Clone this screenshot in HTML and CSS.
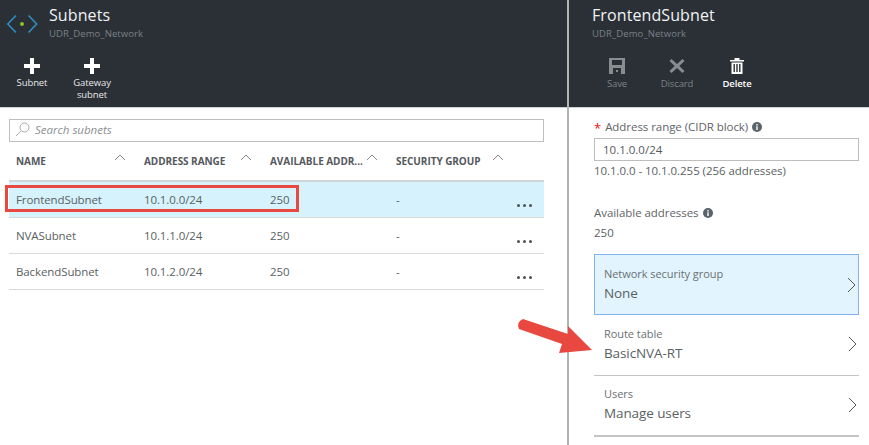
FILE: index.html
```html
<!DOCTYPE html>
<html lang="en">
<head>
<meta charset="utf-8">
<title>Subnets</title>
<link rel="stylesheet" href="styles.css">
</head>
<body>
<div class="page">
  <section class="blade blade-left">
    <header class="head">
      <div class="title-row">
        <svg class="logo" width="32" height="20" viewBox="0 0 32 20"><path d="M10 1.5 L1.8 10 L10 18.5" fill="none" stroke="#2f8fc4" stroke-width="1.6"/><path d="M22.5 1.5 L30.7 10 L22.5 18.5" fill="none" stroke="#2f8fc4" stroke-width="1.6"/><circle cx="16" cy="10" r="2" fill="#8cc31f"/></svg>
        <div class="titles">
          <h1 class="title">Subnets</h1>
          <div class="sub">UDR_Demo_Network</div>
        </div>
      </div>
      <div class="tools tools-left">
        <div class="tool tool-subnet">
          <svg class="ico" width="16" height="16" viewBox="0 0 16 16"><path d="M6 0h4v6h6v4h-6v6H6v-6H0V6h6z" fill="#fff"/></svg>
          <span>Subnet</span>
        </div>
        <div class="tool tool-gw">
          <svg class="ico" width="16" height="16" viewBox="0 0 16 16"><path d="M6 0h4v6h6v4h-6v6H6v-6H0V6h6z" fill="#fff"/></svg>
          <span>Gateway<br>subnet</span>
        </div>
      </div>
    </header>
    <div class="body-left">
      <div class="search">
        <svg width="15" height="15" viewBox="0 0 15 15"><circle cx="9.5" cy="5.5" r="4.5" fill="none" stroke="#a9a9a9"/><path d="M6 9 L1 14" stroke="#a9a9a9"/></svg>
        <span>Search subnets</span>
      </div>
      <div class="grid">
        <div class="row row-head">
          <div class="cell c1">NAME<svg class="caret" width="12" height="7" viewBox="0 0 12 7"><path d="M1 6 L6 1 L11 6" fill="none" stroke="#8a8a8a"/></svg></div>
          <div class="cell c2">ADDRESS RANGE<svg class="caret" width="12" height="7" viewBox="0 0 12 7"><path d="M1 6 L6 1 L11 6" fill="none" stroke="#8a8a8a"/></svg></div>
          <div class="cell c3">AVAILABLE ADDR...<svg class="caret" width="12" height="7" viewBox="0 0 12 7"><path d="M1 6 L6 1 L11 6" fill="none" stroke="#8a8a8a"/></svg></div>
          <div class="cell c4">SECURITY GROUP<svg class="caret" width="12" height="7" viewBox="0 0 12 7"><path d="M1 6 L6 1 L11 6" fill="none" stroke="#8a8a8a"/></svg></div>
        </div>
        <div class="row row-sel">
          <div class="cell c1">FrontendSubnet</div><div class="cell c2">10.1.0.0/24</div><div class="cell c3">250</div><div class="cell c4">-</div><div class="more"><i></i><i></i><i></i></div>
        </div>
        <div class="row">
          <div class="cell c1">NVASubnet</div><div class="cell c2">10.1.1.0/24</div><div class="cell c3">250</div><div class="cell c4">-</div><div class="more"><i></i><i></i><i></i></div>
        </div>
        <div class="row">
          <div class="cell c1">BackendSubnet</div><div class="cell c2">10.1.2.0/24</div><div class="cell c3">250</div><div class="cell c4">-</div><div class="more"><i></i><i></i><i></i></div>
        </div>
      </div>
    </div>
  </section>
  <div class="divider"></div>
  <section class="blade blade-right">
    <header class="head">
      <div class="titles titles-right">
        <h1 class="title">FrontendSubnet</h1>
        <div class="sub">UDR_Demo_Network</div>
      </div>
      <div class="tools tools-right">
        <div class="tool tool-action disabled">
          <svg class="ico" width="16" height="16" viewBox="0 0 16 16"><path fill-rule="evenodd" d="M0 0h16v16H0zM3 2v5h10V2zM4 10v6h8v-6zM7 12h2v2H7z" fill="#8a8d90"/></svg>
          <span>Save</span>
        </div>
        <div class="tool tool-action disabled">
          <svg class="ico" width="16" height="16" viewBox="0 0 16 16"><path d="M2.5 1 L8 6 L13.5 1 L15.5 3 L10.3 8 L15.5 13 L13.5 15 L8 10 L2.5 15 L.5 13 L5.7 8 L.5 3 Z" fill="#8a8d90"/></svg>
          <span>Discard</span>
        </div>
        <div class="tool tool-action strong">
          <svg class="ico" width="16" height="16" viewBox="0 0 16 16"><path fill-rule="evenodd" d="M5.5 0h5v2H15v1.4H1V2h4.5zM2.5 4.5h11V16h-11zM4.5 6v8h1.4V6zM7.3 6v8h1.4V6zM10.1 6v8h1.4V6z" fill="#fff"/></svg>
          <span>Delete</span>
        </div>
      </div>
    </header>
    <div class="body-right">
      <div class="label"><b class="req">*</b> Address range (CIDR block)<svg class="info" width="10" height="10" viewBox="0 0 10 10"><circle cx="5" cy="5" r="5" fill="#59636b"/><path d="M4.3 4.3h1.4v3.7H4.3zM4.3 2h1.4v1.4H4.3z" fill="#fff"/></svg></div>
      <div class="input">10.1.0.0/24</div>
      <div class="hint">10.1.0.0 - 10.1.0.255 (256 addresses)</div>
      <div class="label label-avail">Available addresses<svg class="info" width="10" height="10" viewBox="0 0 10 10"><circle cx="5" cy="5" r="5" fill="#59636b"/><path d="M4.3 4.3h1.4v3.7H4.3zM4.3 2h1.4v1.4H4.3z" fill="#fff"/></svg></div>
      <div class="value">250</div>
      <div class="pick pick-active">
        <div><div class="pick-label">Network security group</div><div class="pick-value">None</div></div>
        <svg width="9" height="16" viewBox="0 0 9 16"><path d="M1 1 L8 8 L1 15" fill="none" stroke="#555"/></svg>
      </div>
      <div class="pick">
        <div><div class="pick-label">Route table</div><div class="pick-value">BasicNVA-RT</div></div>
        <svg width="9" height="16" viewBox="0 0 9 16"><path d="M1 1 L8 8 L1 15" fill="none" stroke="#555"/></svg>
      </div>
      <div class="pick pick-last">
        <div><div class="pick-label">Users</div><div class="pick-value">Manage users</div></div>
        <svg width="9" height="16" viewBox="0 0 9 16"><path d="M1 1 L8 8 L1 15" fill="none" stroke="#555"/></svg>
      </div>
    </div>
  </section>
  <div class="highlight"></div>
  <svg class="arrow" width="80" height="44" viewBox="0 0 80 44"><path d="M8 3 L53 18 L53 10 L77 34 L44 37 L47 28 L4 13 Q1 6 8 3 Z" fill="#e8483f"/></svg>
</div>
</body>
</html>
```

FILE: styles.css
```css
* { box-sizing: border-box; }
html, body { margin: 0; padding: 0; background: #fff; }
body { font-family: "Open Sans", "Noto Sans", sans-serif; color: #5a5f63; }
.page { position: relative; display: flex; width: 869px; height: 445px; overflow: hidden; }
.blade { display: flex; flex-direction: column; }
.blade-left { width: 567px; }
.blade-right { flex: 1; }
.divider { width: 2px; background: #b4b4b4; }
.head { height: 108px; background: #2a3036; border-bottom: 1px solid #c9d3d8; flex: none; }
.title-row { display: flex; padding: 5px 0 0 6px; }
.logo { margin: 9px 0 0 0; flex: none; }
.titles { margin-left: 11px; }
.titles-right { margin-left: 23px; padding-top: 5px; }
.title { margin: 0; font-size: 16px; line-height: 20px; font-weight: 400; color: #f1f2f3; letter-spacing: 0.1px; }
.sub { font-size: 9.5px; line-height: 13px; margin-top: 2px; color: #7b8187; font-weight: 400; letter-spacing: 0.1px; }
.tools { display: flex; }
.tools-left { padding: 18px 0 0 0; }
.tools-right { padding: 18px 0 0 18px; }
.tool { display: flex; flex-direction: column; align-items: center; color: #e6e7e8; font-size: 9.5px; line-height: 12px; text-align: center; font-weight: 400; letter-spacing: -0.1px; }
.tool .ico { margin-bottom: 3px; }
.tool-subnet { width: 64px; }
.tool-gw { width: 56px; }
.tool-action { width: 60px; }
.tool-action span { margin-top: 1px; }
.disabled { color: #7e8286; }
.strong { color: #fff; font-weight: 600; }
.body-left { padding: 11px 0 0 9px; }
.search { display: flex; align-items: center; gap: 5px; width: 535px; height: 23px; border: 1px solid #bfbfbf; padding: 0 0 2px 5px; font-size: 11.5px; font-style: italic; color: #8c8f92; }
.grid { width: 535px; }
.row { position: relative; display: grid; grid-template-columns: 128px 126px 126px 155px; height: 36px; border-bottom: 1px solid #d9d9d9; font-size: 11.5px; align-items: center; }
.row-head { height: 40px; border-bottom: 2px solid #d0d5d8; font-size: 10px; font-weight: 700; color: #55595d; padding-bottom: 1px; }
.row-sel { background: #d6f3fd; }
.cell { padding-left: 7px; position: relative; letter-spacing: -0.1px; white-space: nowrap; }
.row-head .cell { letter-spacing: -0.05px; }
.caret { position: absolute; top: 0; right: 11px; }
.c4 .caret { right: 40px; }
.more { position: absolute; right: 12px; top: 22px; display: flex; gap: 3px; }
.more i { width: 3px; height: 3px; background: #4d5256; border-radius: 50%; }
.body-right { padding: 11px 10px 0 25px; flex: 1; }
.label { font-size: 11.5px; line-height: 16px; color: #5f6468; display: flex; align-items: center; letter-spacing: -0.05px; }
.req { color: #e81123; font-weight: 400; margin-right: 4px; font-size: 13px; height: 12px; line-height: 14px; }
.info { margin-left: 4px; }
.input { height: 23px; margin-top: 3px; width: 265px; border: 1px solid #bdbdbd; padding-left: 8px; font-size: 11.5px; line-height: 21px; color: #55595d; }
.hint { font-size: 11.5px; line-height: 16px; margin-top: 2px; letter-spacing: -0.05px; }
.label-avail { margin-top: 26px; }
.value { font-size: 11.5px; line-height: 16px; margin-top: 4px; }
.pick { display: flex; justify-content: space-between; align-items: center; width: 265px; height: 61px; margin: 0; padding: 0 2px 2px 10px; border-bottom: 1px solid #c4c4c4; }
.pick-active { margin-top: 13px; height: 61px; background: #e2f5fe; border: 1px solid #83b3ee; padding-left: 9px; padding-bottom: 0; }
.pick-last { border-bottom: 2px solid #c4c4c4; }
.pick-label { font-size: 11px; line-height: 15px; color: #6b7074; letter-spacing: -0.05px; }
.pick-value { font-size: 13.5px; line-height: 19px; margin-top: 3px; color: #5a5f63; letter-spacing: -0.1px; }
.highlight { position: absolute; left: 5px; top: 185px; width: 294px; height: 27px; border: 3px solid #e8483f; }
.arrow { position: absolute; left: 515px; top: 316px; }
```
